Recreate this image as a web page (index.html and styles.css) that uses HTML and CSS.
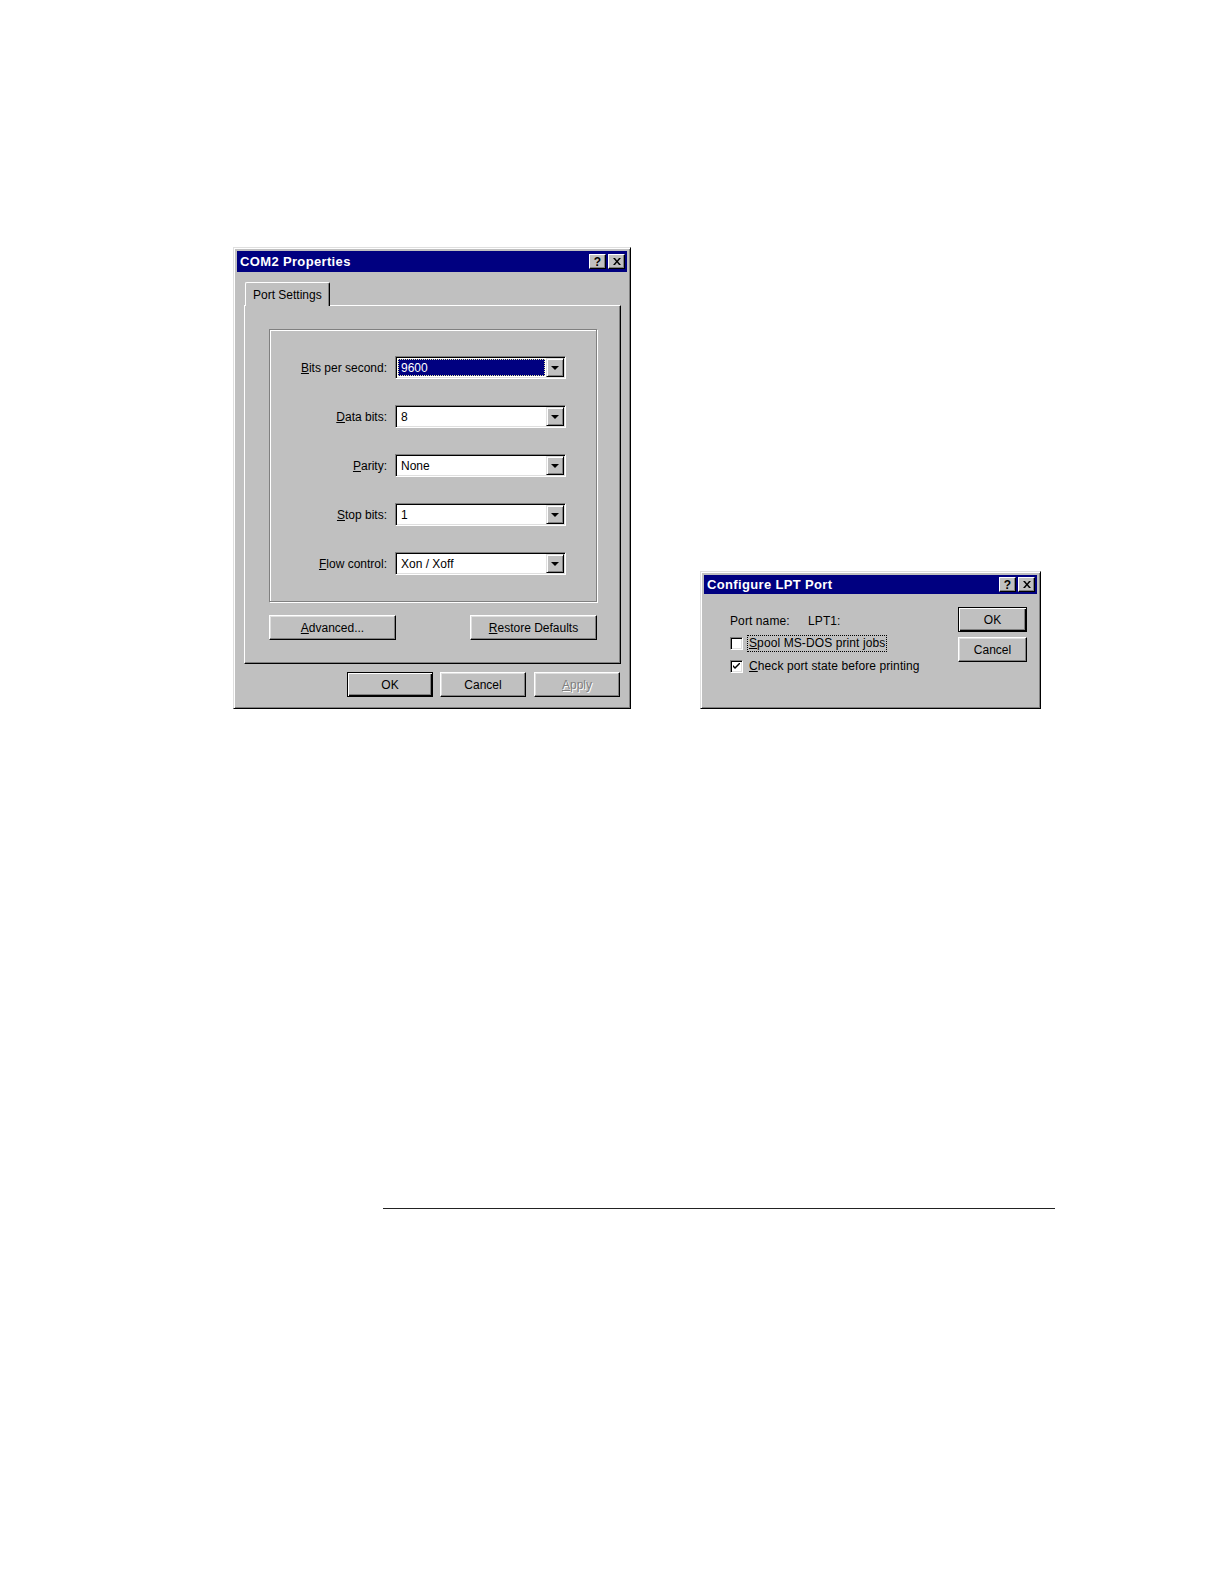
FILE: index.html
```html
<!DOCTYPE html>
<html>
<head>
<meta charset="utf-8">
<title>COM2 Properties</title>
<link rel="stylesheet" href="styles.css">
</head>
<body>
<div class="page">
  <div class="dialogs">
    <div class="window com2">
      <div class="titlebar">
        <span class="title">COM2 Properties</span>
        <div class="tbtns">
          <span class="tbtn help">?</span>
          <span class="tbtn close"><svg width="8" height="7" viewBox="0 0 8 7"><path d="M0 0h2l2 2.5L6 0h2L5 3.5 8 7H6L4 4.5 2 7H0l3-3.5z" fill="#000"/></svg></span>
        </div>
      </div>
      <div class="cbody">
        <div class="tabs"><div class="tab">Port Settings</div></div>
        <div class="tabpage">
          <div class="group">
            <label class="lbl"><u>B</u>its per second:</label>
            <div class="combo"><span class="val sel">9600</span><span class="drop"><i class="tri"></i></span></div>
            <label class="lbl"><u>D</u>ata bits:</label>
            <div class="combo"><span class="val">8</span><span class="drop"><i class="tri"></i></span></div>
            <label class="lbl"><u>P</u>arity:</label>
            <div class="combo"><span class="val">None</span><span class="drop"><i class="tri"></i></span></div>
            <label class="lbl"><u>S</u>top bits:</label>
            <div class="combo"><span class="val">1</span><span class="drop"><i class="tri"></i></span></div>
            <label class="lbl"><u>F</u>low control:</label>
            <div class="combo"><span class="val">Xon / Xoff</span><span class="drop"><i class="tri"></i></span></div>
          </div>
          <div class="brow">
            <div class="btn wide"><span><u>A</u>dvanced...</span></div>
            <div class="btn wide"><span><u>R</u>estore Defaults</span></div>
          </div>
        </div>
        <div class="actions">
          <div class="btn act def">OK</div>
          <div class="btn act">Cancel</div>
          <div class="btn act dis apply"><span><u>A</u>pply</span></div>
        </div>
      </div>
    </div>

    <div class="window lpt">
      <div class="titlebar">
        <span class="title">Configure LPT Port</span>
        <div class="tbtns">
          <span class="tbtn help">?</span>
          <span class="tbtn close"><svg width="8" height="7" viewBox="0 0 8 7"><path d="M0 0h2l2 2.5L6 0h2L5 3.5 8 7H6L4 4.5 2 7H0l3-3.5z" fill="#000"/></svg></span>
        </div>
      </div>
      <div class="lbody">
        <div class="lleft">
          <div class="lrow"><span class="pname">Port name:</span><span>LPT1:</span></div>
          <div class="lrow"><span class="chk"></span><span class="focus"><u>S</u>pool MS-DOS print jobs</span></div>
          <div class="lrow"><span class="chk"><svg width="7" height="7" viewBox="0 0 7 7"><path d="M0 2l2 2 5-5v2L2 6 0 4z" fill="#000"/></svg></span><span class="ctext"><u>C</u>heck port state before printing</span></div>
        </div>
        <div class="lright">
          <div class="btn lbtn def">OK</div>
          <div class="btn lbtn">Cancel</div>
        </div>
      </div>
    </div>
  </div>
  <div class="rule"></div>
</div>
</body>
</html>
```

FILE: styles.css
```css
html, body {
  margin: 0;
  padding: 0;
  background: #ffffff;
}
body {
  font-family: "Liberation Sans", Arial, sans-serif;
  font-size: 12px;
  color: #000;
}
.page {
  width: 1224px;
  height: 1582px;
  overflow: hidden;
}
.dialogs {
  display: flex;
  align-items: flex-end;
  padding: 247px 0 0 233px;
  gap: 69px;
}
u { text-decoration: underline; text-underline-offset: 1px; }

.window {
  box-sizing: border-box;
  background: #c0c0c0;
  border: 1px solid;
  border-color: #dfdfdf #000 #000 #dfdfdf;
  box-shadow: inset 1px 1px #fff, inset -1px -1px #808080;
  padding: 3px;
  display: flex;
  flex-direction: column;
}
.com2 { width: 398px; height: 462px; }
.lpt { width: 341px; height: 138px; }

.titlebar {
  height: 21px;
  flex: none;
  background: #000080;
  color: #fff;
  display: flex;
  align-items: center;
  justify-content: space-between;
  padding: 0 2px 0 3px;
}
.lpt .titlebar { height: 19px; }
.title {
  font-weight: bold;
  font-size: 13px;
  letter-spacing: 0.35px;
}
.tbtns { display: flex; gap: 2px; }
.tbtn {
  box-sizing: border-box;
  width: 17px;
  height: 15px;
  background: #c0c0c0;
  border: 1px solid;
  border-color: #fff #000 #000 #fff;
  box-shadow: inset -1px -1px #808080;
  color: #000;
  display: flex;
  align-items: center;
  justify-content: center;
  font-weight: bold;
  font-size: 12px;
  line-height: 1;
}

/* COM2 body */
.cbody {
  flex: 1;
  display: flex;
  flex-direction: column;
  padding: 10px 6px 0 7px;
}
.tabs {
  display: flex;
  padding-left: 1px;
}
.tab {
  position: relative;
  z-index: 1;
  box-sizing: border-box;
  height: 24px;
  margin-bottom: -1px;
  padding: 0 7px;
  background: #c0c0c0;
  border: 1px solid;
  border-bottom: 0;
  border-color: #fff #000 #000 #fff;
  border-radius: 2px 2px 0 0;
  box-shadow: inset -1px 0 #808080;
  display: flex;
  align-items: center;
}
.tabpage {
  box-sizing: border-box;
  height: 359px;
  border: 1px solid;
  border-color: #fff #000 #000 #fff;
  box-shadow: inset -1px -1px #808080;
  padding: 23px 23px 0 24px;
}
.group {
  box-sizing: border-box;
  height: 273px;
  border: 1px solid #808080;
  box-shadow: inset 1px 1px #fff, 1px 1px #fff;
  display: grid;
  grid-template-columns: 1fr 171px;
  column-gap: 8px;
  row-gap: 26px;
  align-items: center;
  align-content: start;
  padding: 26px 30px 0 0;
}
.lbl {
  text-align: right;
  white-space: nowrap;
}
.combo {
  box-sizing: border-box;
  height: 23px;
  background: #fff;
  border: 1px solid;
  border-color: #808080 #fff #fff #808080;
  box-shadow: inset 1px 1px #000, inset -1px -1px #dfdfdf;
  padding: 1px;
  display: flex;
  align-items: stretch;
}
.val {
  flex: 1;
  box-sizing: border-box;
  margin: 1px;
  line-height: 16px;
  padding-left: 2px;
  border: 1px solid transparent;
}
.val.sel {
  background: #000080;
  color: #fff;
  border: 1px dotted #e8e8a0;
}
.drop {
  box-sizing: border-box;
  width: 18px;
  background: #c0c0c0;
  border: 1px solid;
  border-color: #dfdfdf #000 #000 #dfdfdf;
  box-shadow: inset 1px 1px #fff, inset -1px -1px #808080;
  display: flex;
  align-items: center;
  justify-content: center;
}
.tri {
  display: block;
  width: 0;
  height: 0;
  border-top: 4px solid #000;
  border-left: 4px solid transparent;
  border-right: 4px solid transparent;
  margin-top: 1px;
}

.btn {
  box-sizing: border-box;
  height: 25px;
  background: #c0c0c0;
  border: 1px solid;
  border-color: #fff #000 #000 #fff;
  box-shadow: inset -1px -1px #808080, inset 1px 1px #dfdfdf;
  display: flex;
  align-items: center;
  justify-content: center;
  white-space: nowrap;
}
.btn.def {
  border-color: #000;
  box-shadow: inset 1px 1px #fff, inset -1px -1px #000, inset -2px -2px #808080;
}
.btn.dis {
  color: #808080;
  text-shadow: 1px 1px #fff;
}
.brow {
  display: flex;
  justify-content: space-between;
  padding-top: 13px;
}
.wide { width: 127px; }

.actions {
  display: flex;
  justify-content: flex-end;
  gap: 7px;
  padding: 8px 1px 0 0;
}
.act { width: 86px; }
.apply { margin-left: 1px; }

/* LPT body */
.lbody {
  flex: 1;
  display: flex;
  justify-content: space-between;
}
.lleft {
  padding: 16px 0 0 26px;
  display: flex;
  flex-direction: column;
}
.lrow {
  height: 22.5px;
  display: flex;
  align-items: center;
  white-space: nowrap;
  letter-spacing: 0.1px;
}
.pname { width: 78px; }
.chk {
  box-sizing: border-box;
  width: 13px;
  height: 13px;
  background: #fff;
  border: 1px solid;
  border-color: #808080 #fff #fff #808080;
  box-shadow: inset 1px 1px #000, inset -1px -1px #dfdfdf;
  display: flex;
  align-items: center;
  justify-content: center;
  margin-right: 5px;
}
.focus {
  outline: 1px dotted #000;
  outline-offset: 0;
  padding: 0 1px;
  line-height: 15px;
}
.ctext { padding-left: 1px; }
.lright {
  padding: 13px 10px 0 0;
  display: flex;
  flex-direction: column;
  gap: 5px;
}
.lbtn { width: 69px; }

.rule {
  margin: 499px 0 0 383px;
  width: 672px;
  height: 1px;
  background: #222;
}
```
